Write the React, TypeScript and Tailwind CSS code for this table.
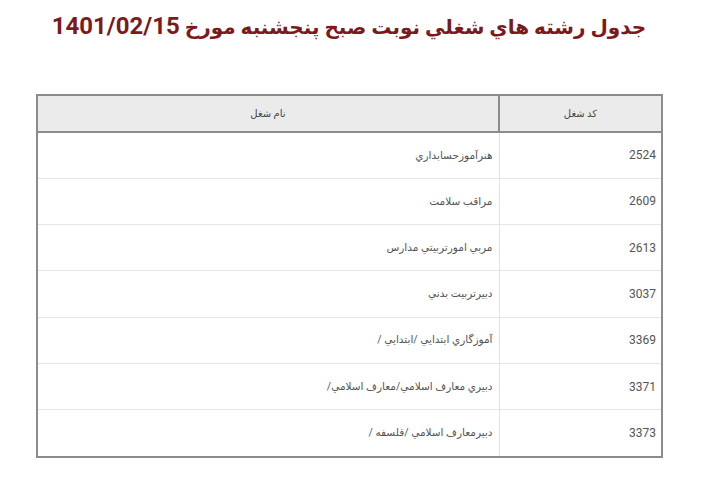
const ROWS = [
  { code: "2524", name: "هنرآموزحسابداري" },
  { code: "2609", name: "مراقب سلامت" },
  { code: "2613", name: "مربي امورتربيتي مدارس" },
  { code: "3037", name: "دبيرتربيت بدني" },
  { code: "3369", name: "آموزگاري ابتدايي /ابتدايي /" },
  { code: "3371", name: "دبيري معارف اسلامي/معارف اسلامي/" },
  { code: "3373", name: "دبيرمعارف اسلامي /فلسفه /" },
];

export default function App() {
  return (
    <div
      dir="rtl"
      className="h-[492px] w-[720px] bg-white font-['Roboto','DejaVu_Sans',sans-serif]"
    >
      <h1 className="pr-[22px] pt-[10px] text-center text-[20px] font-bold leading-[32px] text-[#7b1a1d]">
        جدول رشته هاي شغلي نوبت صبح پنجشنبه مورخ{" "}
        <span className="text-[24px] tracking-[0.6px]">1401/02/15</span>
      </h1>

      <div className="mr-[57px] mt-[51px] w-[627px] border-2 border-[#8c8c8c]">
        <table className="w-full border-collapse">
          <thead>
            <tr className="h-[36px] bg-[#ebebeb]">
              <th className="w-[162px] border-b-2 border-l-2 border-[#8c8c8c] text-center text-[10px] font-normal text-[#444]">
                كد شغل
              </th>
              <th className="border-b-2 border-[#8c8c8c] text-center text-[10px] font-normal text-[#444]">
                نام شغل
              </th>
            </tr>
          </thead>
          <tbody>
            {ROWS.map((r, i) => (
              <tr
                key={r.code}
                className={i < ROWS.length - 1 ? "h-[46.3px] border-b border-[#e6e6e6]" : "h-[46.3px]"}
              >
                <td className="border-l border-[#e2e2e2] pr-[5px] text-right text-[12px] text-[#555]">
                  {r.code}
                </td>
                <td className="pr-[6px] text-right text-[10.5px] text-[#555]">{r.name}</td>
              </tr>
            ))}
          </tbody>
        </table>
      </div>
    </div>
  );
}
